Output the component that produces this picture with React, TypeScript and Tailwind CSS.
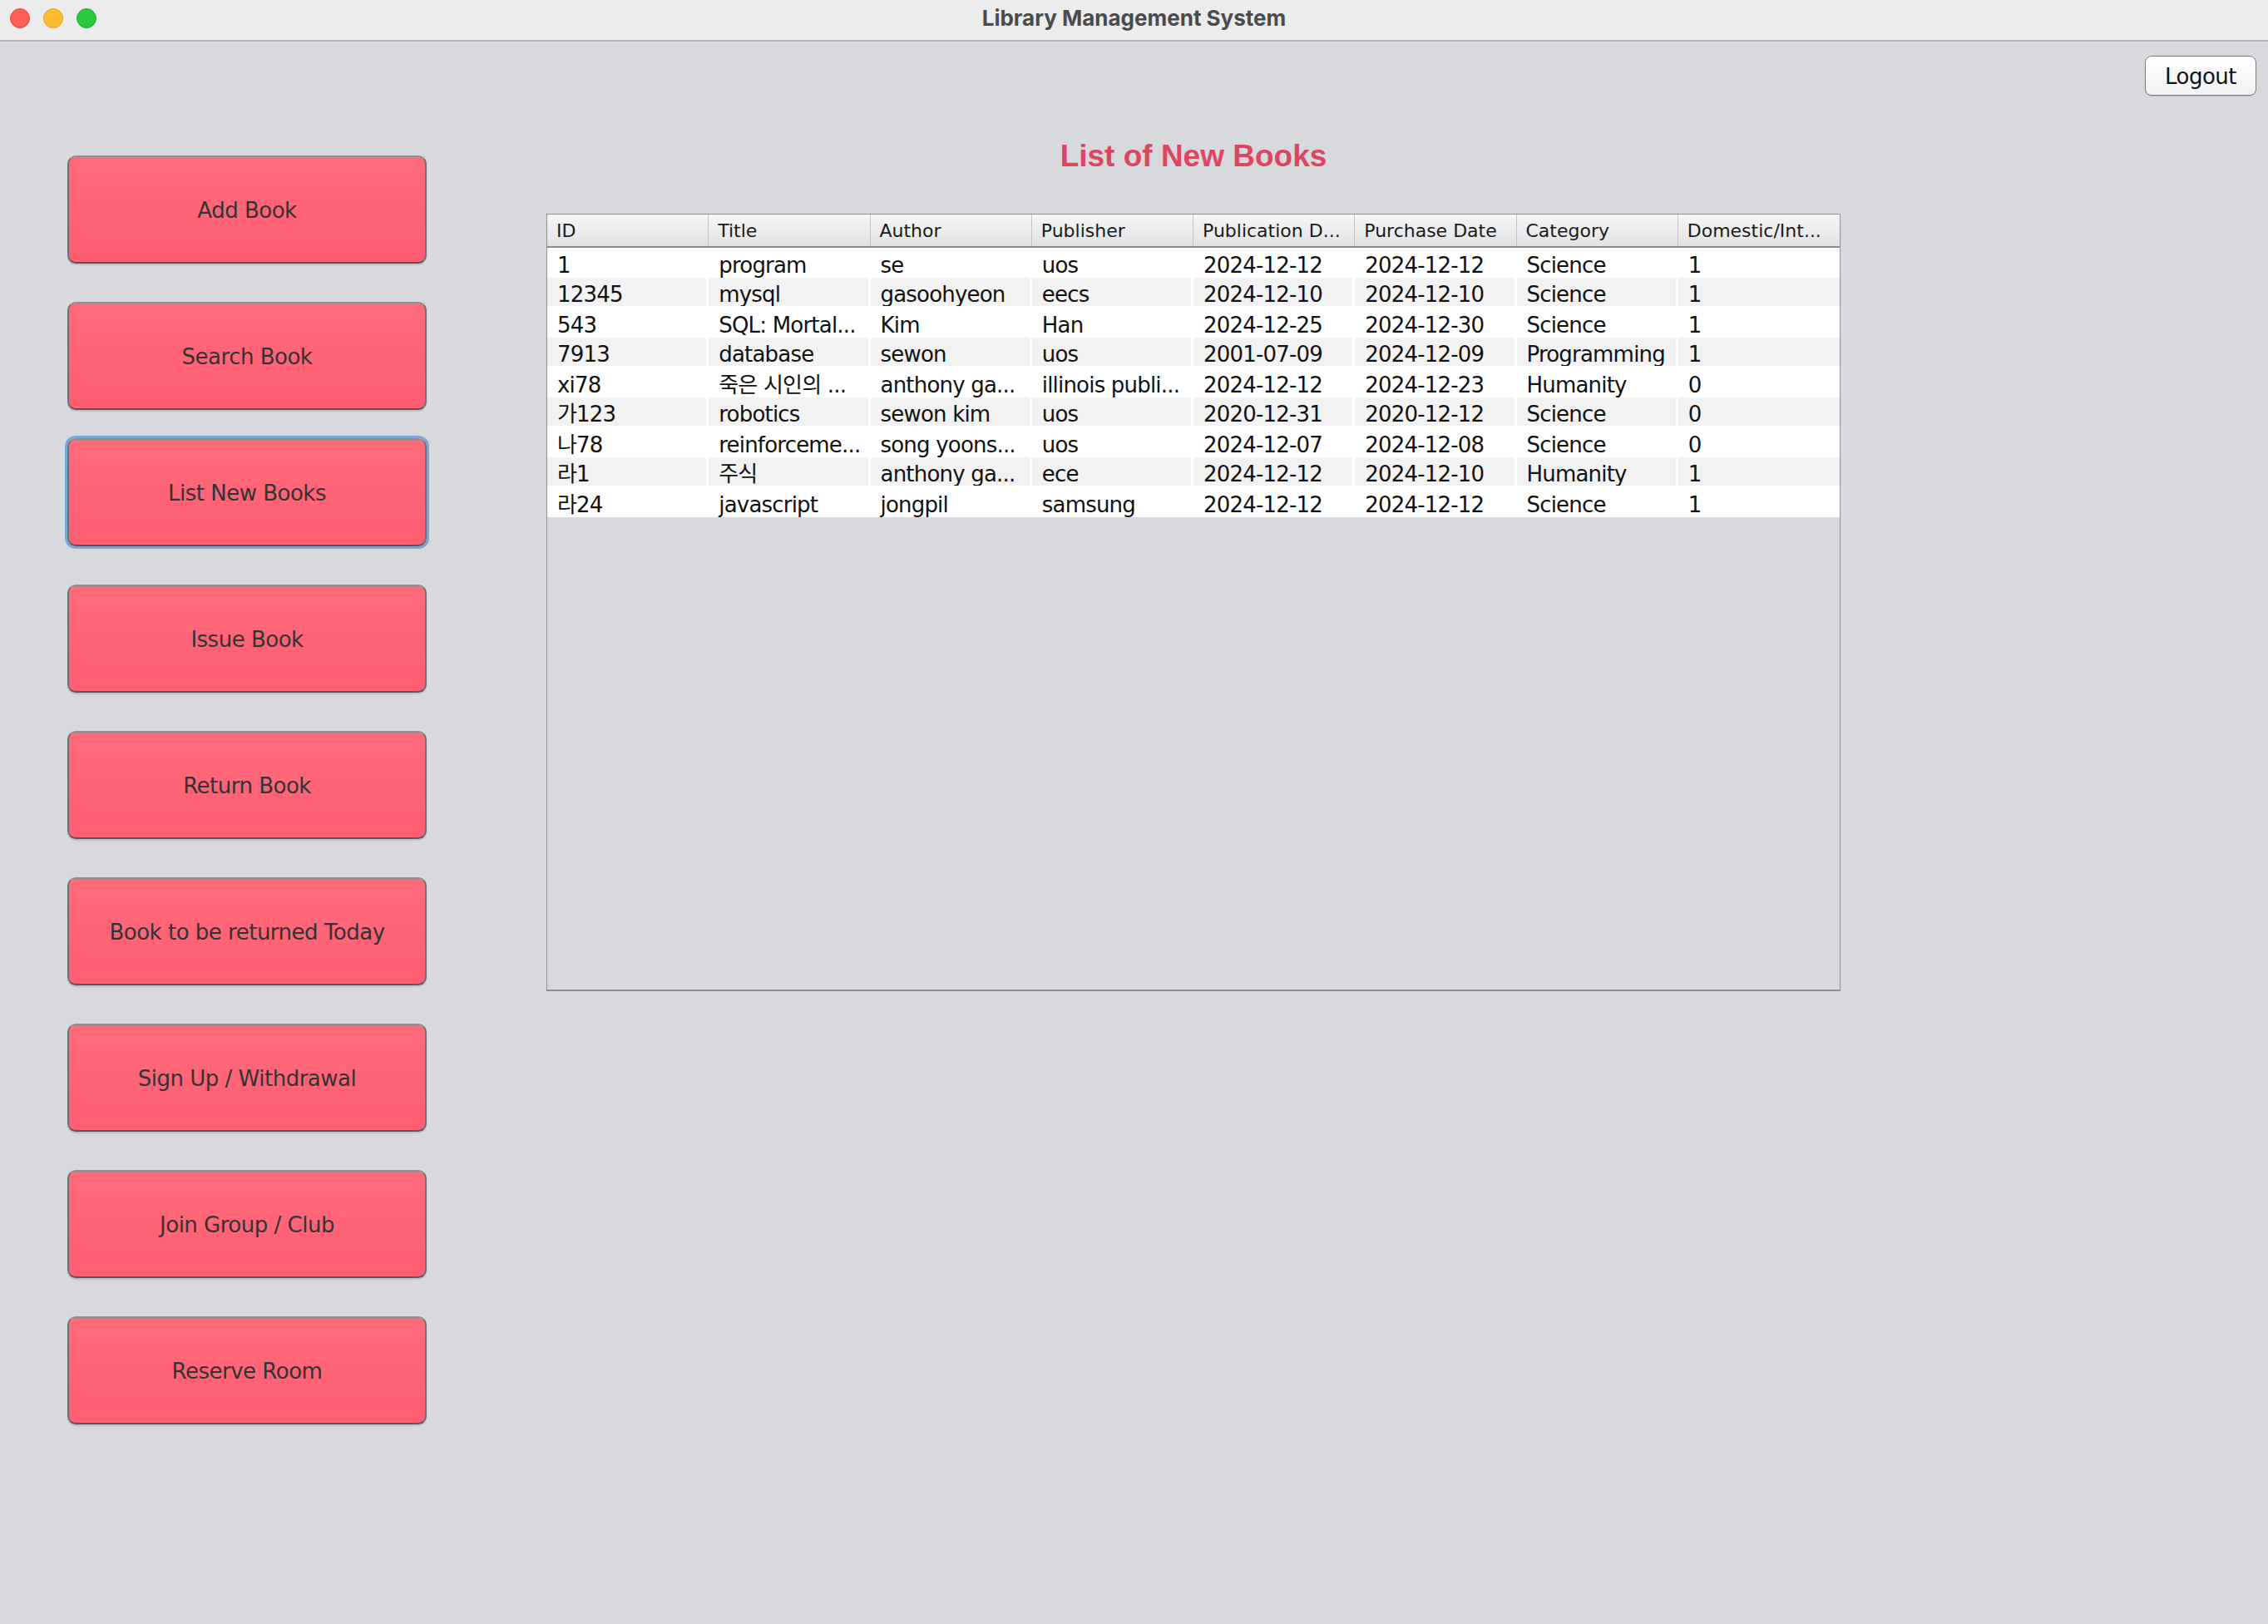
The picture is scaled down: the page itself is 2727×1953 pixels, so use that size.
import React from "react"

const menu = [
  "Add Book",
  "Search Book",
  "List New Books",
  "Issue Book",
  "Return Book",
  "Book to be returned Today",
  "Sign Up / Withdrawal",
  "Join Group / Club",
  "Reserve Room",
]

const columns = ["ID", "Title", "Author", "Publisher", "Publication D...", "Purchase Date", "Category", "Domestic/Int..."]

const rows = [
  ["1", "program", "se", "uos", "2024-12-12", "2024-12-12", "Science", "1"],
  ["12345", "mysql", "gasoohyeon", "eecs", "2024-12-10", "2024-12-10", "Science", "1"],
  ["543", "SQL: Mortal...", "Kim", "Han", "2024-12-25", "2024-12-30", "Science", "1"],
  ["7913", "database", "sewon", "uos", "2001-07-09", "2024-12-09", "Programming", "1"],
  ["xi78", "죽은 시인의 ...", "anthony ga...", "illinois publi...", "2024-12-12", "2024-12-23", "Humanity", "0"],
  ["가123", "robotics", "sewon kim", "uos", "2020-12-31", "2020-12-12", "Science", "0"],
  ["나78", "reinforceme...", "song yoons...", "uos", "2024-12-07", "2024-12-08", "Science", "0"],
  ["라1", "주식", "anthony ga...", "ece", "2024-12-12", "2024-12-10", "Humanity", "1"],
  ["라24", "javascript", "jongpil", "samsung", "2024-12-12", "2024-12-12", "Science", "1"],
]

const uiFont = "font-['DejaVu_Sans','Noto_Sans_CJK_KR',sans-serif]"

function MenuButton({ label, focused, className }: { label: string; focused?: boolean; className?: string }) {
  return (
    <button
      className={`flex h-[130px] w-[432px] items-center justify-center rounded-[10px] border-2 border-x-[#6f7073] border-t-[#8f9094] border-b-[#55565a] bg-gradient-to-b from-[#ff6b7c] to-[#ff5d71] pt-[3px] text-[26px] tracking-[-0.5px] text-[#333333] shadow-[0_2px_1px_rgba(0,0,0,0.12)] ${uiFont} ${
        focused ? "ring-[3px] ring-[#79a6d6]" : ""
      } ${className ?? ""}`}
    >
      {label}
    </button>
  )
}

export default function App() {
  return (
    <div className="flex h-[1953px] w-[2727px] flex-col bg-[#d8d9dd]">
      {/* title bar */}
      <div className="grid h-[50px] shrink-0 grid-cols-[1fr_auto_1fr] border-b-2 border-[#b3b3b5] bg-[#ececec]">
        <div className="flex gap-[16px] pl-[12px] pt-[10px]">
          <span className="h-[24px] w-[24px] rounded-full border border-[#e1443e] bg-[#ff5f57]" />
          <span className="h-[24px] w-[24px] rounded-full border border-[#de9f22] bg-[#febc2e]" />
          <span className="h-[24px] w-[24px] rounded-full border border-[#1aab29] bg-[#28c840]" />
        </div>
        <div className="flex items-center pb-[5px] font-['Inter',sans-serif] text-[26px] font-bold text-[#4b4b4b]">
          Library Management System
        </div>
        <div />
      </div>

      <div className="flex flex-1">
        {/* side menu */}
        <div className="flex w-[657px] shrink-0 flex-col pl-[81px] pt-[137px]">
          {menu.map((label, i) => (
            <MenuButton
              key={label}
              label={label}
              focused={i === 2}
              className={i === 0 ? "" : i === 2 ? "mt-[34px]" : "mt-[46px]"}
            />
          ))}
        </div>

        {/* content */}
        <div className="flex flex-1 flex-col">
          <div className="flex justify-end pr-[14px] pt-[17px]">
            <button
              className={`h-[48px] w-[134px] rounded-[8px] border-[1.5px] border-[#7b7c80] bg-gradient-to-b from-white to-[#f1f1f1] pt-[3px] text-[26px] tracking-[-0.5px] text-[#111111] shadow-[0_1px_1px_rgba(0,0,0,0.15)] ${uiFont}`}
            >
              Logout
            </button>
          </div>

          <div className="mt-[55px] w-[1556px]">
            <h1 className="h-[36px] text-center font-['Liberation_Sans',Arial,sans-serif] text-[37px] font-bold leading-[36px] text-[#df4560]">
              List of New Books
            </h1>

            <div className={`mt-[51px] flex h-[935px] flex-col border border-b-2 border-[#8d8f96] ${uiFont}`}>
              <div className="grid h-[40px] shrink-0 grid-cols-8 border-b-2 border-[#8a8b90]">
                {columns.map((c, i) => (
                  <div
                    key={c}
                    className={`flex items-center overflow-hidden whitespace-nowrap bg-gradient-to-b from-[#f7f7f8] to-[#e1e2e5] pl-[11px] text-[22px] text-[#1a1a1a] ${
                      i < columns.length - 1 ? "border-r border-[#c3c4c8]" : ""
                    }`}
                  >
                    {c}
                  </div>
                ))}
              </div>

              {rows.map((r, ri) => (
                <div key={ri} className="grid h-[36px] shrink-0 grid-cols-8 bg-white">
                  {r.map((cell, ci) => (
                    <div
                      key={ci}
                      className={`flex items-center overflow-hidden whitespace-nowrap pl-[12px] pt-[6px] text-[26px] tracking-[-0.8px] text-[#111111] ${
                        ri % 2 === 1 ? "border-b-2 border-white bg-[#f2f2f2]" : ""
                      } ${ri % 2 === 1 && ci < r.length - 1 ? "border-r-[3px]" : ""}`}
                    >
                      {cell}
                    </div>
                  ))}
                </div>
              ))}
            </div>
          </div>
        </div>
      </div>
    </div>
  )
}
